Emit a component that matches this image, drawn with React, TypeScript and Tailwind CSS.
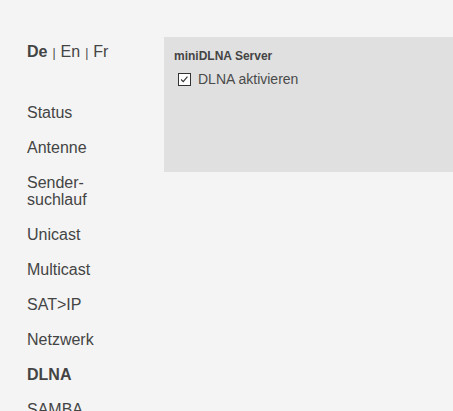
import React from 'react';

const navItems = [
	'Status',
	'Antenne',
	'Sender-suchlauf',
	'Unicast',
	'Multicast',
	'SAT>IP',
	'Netzwerk',
	'DLNA',
	'SAMBA',
];

export default function App() {
	return (
		<div
			className="flex min-h-[411px] w-full bg-[#f4f4f4] text-[#444]"
			style={{ fontFamily: '"Liberation Sans", Arial, sans-serif' }}
		>
			{/* Sidebar */}
			<aside className="w-[164px] shrink-0 pl-[27px] pt-[43px]">
				<div className="flex items-baseline text-[16px] leading-[18px]">
					<span className="font-bold">De</span>
					<span className="mx-[5px] text-[12px]">|</span>
					<span>En</span>
					<span className="mx-[5px] text-[12px]">|</span>
					<span>Fr</span>
				</div>
				<nav className="mt-[42px] flex w-[90px] flex-col gap-[18px] text-[16px] leading-[17px]">
					{navItems.map((item) => (
						<a
							key={item}
							className={item === 'DLNA' ? 'font-bold' : ''}
						>
							{item === 'Sender-suchlauf' ? (
								<>
									Sender-
									<br />
									suchlauf
								</>
							) : (
								item
							)}
						</a>
					))}
				</nav>
			</aside>

			{/* Content */}
			<main className="flex-1 pt-[37px]">
				<section className="h-[135px] bg-[#e0e0e0] px-[10px] pt-[11px]">
					<h3 className="text-[12px] font-bold leading-[16px]">
						miniDLNA Server
					</h3>
					<label className="mt-[4px] flex items-center gap-[7px] pl-[4px] text-[14px] leading-[22px] text-[#4a4a4a]">
						<span className="flex h-[13px] w-[13px] items-center justify-center border border-[#333] bg-white">
							<svg viewBox="0 0 13 13" className="h-[11px] w-[11px]">
								<path d="M2.5 6.5 L5 9 L10 3" fill="none" stroke="#333" strokeWidth="1.3" />
							</svg>
						</span>
						DLNA aktivieren
					</label>
				</section>
			</main>
		</div>
	);
}
